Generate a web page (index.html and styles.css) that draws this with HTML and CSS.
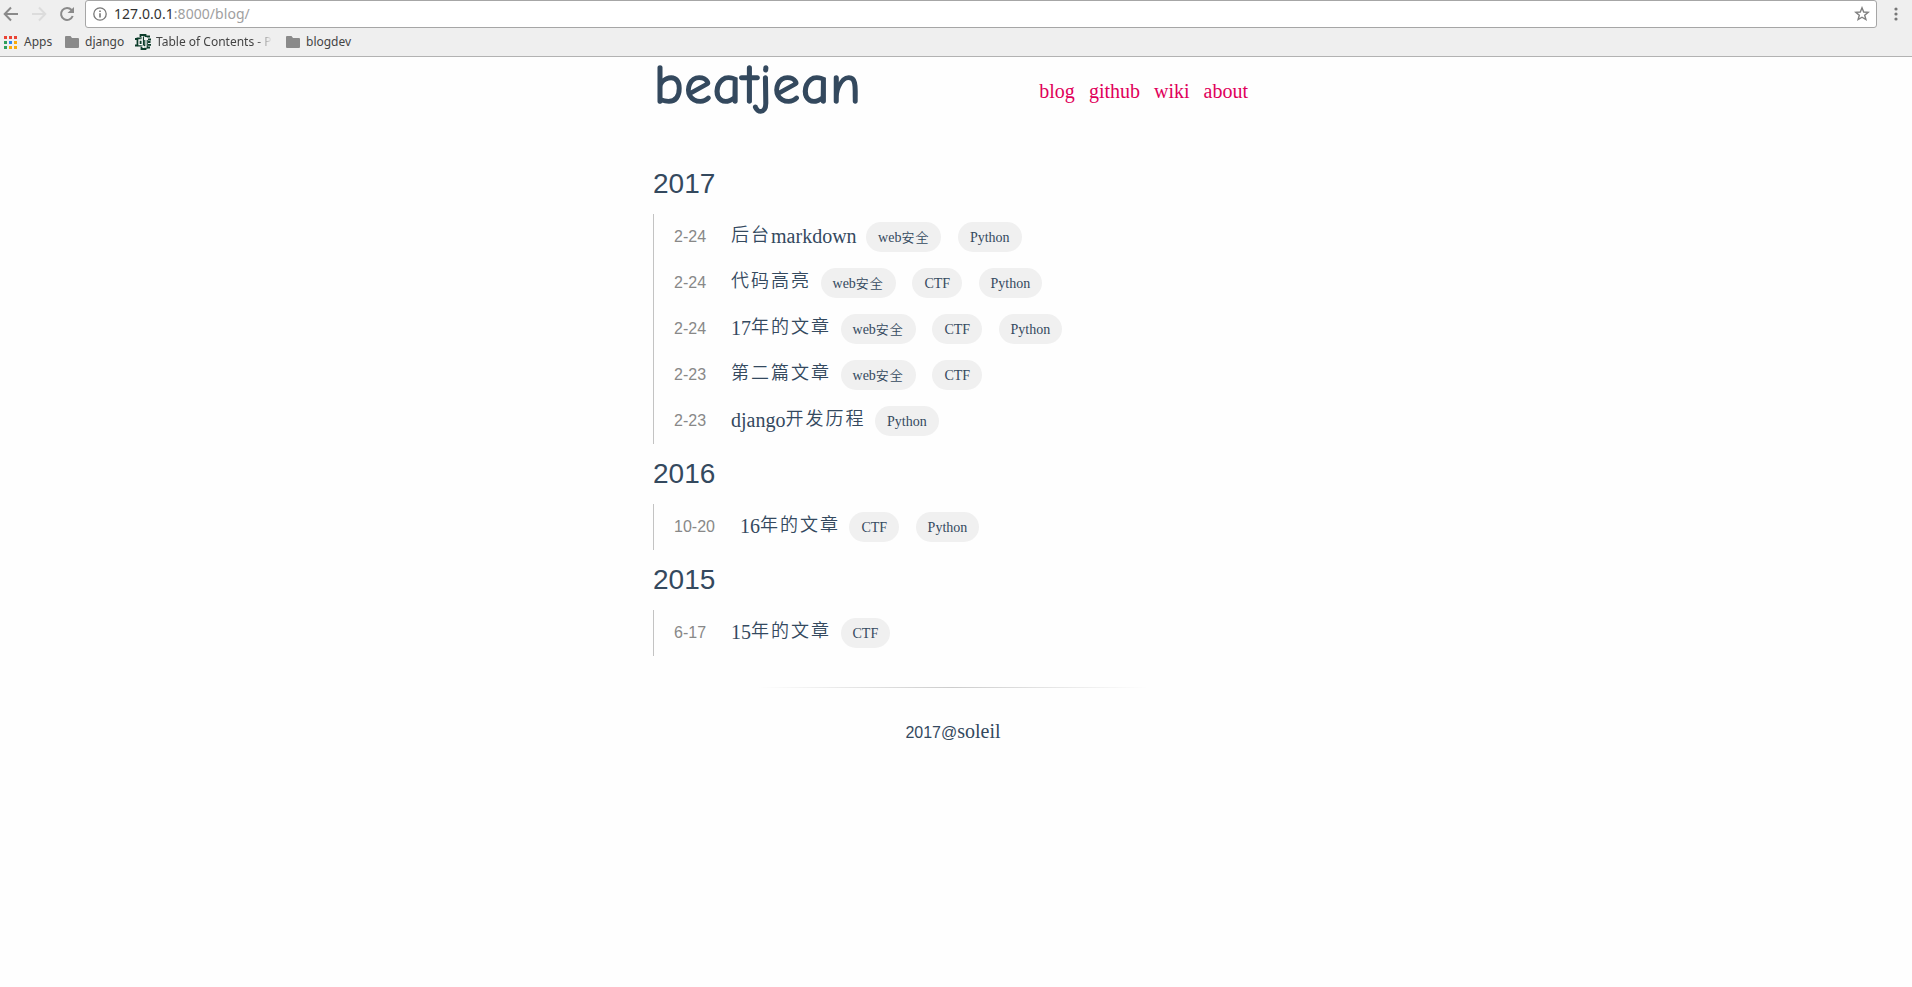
FILE: index.html
```html
<!DOCTYPE html>
<html lang="zh-CN">
<head>
<meta charset="utf-8">
<title>beatjean</title>
<link rel="stylesheet" href="styles.css">
</head>
<body>
<header class="chrome">
  <div class="toolbar">
    <svg class="nav-icons" width="85" height="28" viewBox="0 0 85 28" fill="none" stroke="#8a8a8a" stroke-width="2">
      <path d="M18 14H5.500M11 7.500L4.700 14l6.300 6.500"/>
      <path stroke="#dcdcdc" d="M32 14h12.500M39 7.500l6.300 6.500l-6.300 6.500"/>
      <path d="M71.600 10A6 6 0 1 0 72.700 16"/>
      <path fill="#8a8a8a" stroke="none" d="M74 7v6h-6.500z"/>
    </svg>
    <div class="address">
      <svg class="info" width="14" height="14" viewBox="0 0 14 14" fill="none" stroke="#777"><circle cx="7" cy="7" r="6.200" stroke-width="1.300"/><path stroke-width="1.600" d="M7 6.200v4.300M7 3.400v1.600"/></svg>
      <span class="url"><b>127.0.0.1</b>:8000/blog/</span>
      <svg class="star" width="16" height="16" viewBox="0 0 16 16" fill="none" stroke="#808080" stroke-width="1.400"><path d="M8 1.800l1.700 4.200 4.500.3-3.500 2.900 1.200 4.400L8 11.200l-3.900 2.400 1.200-4.400L1.800 6.300l4.500-.3z"/></svg>
    </div>
    <svg class="menu" width="4" height="14" viewBox="0 0 4 14" fill="#777"><circle cx="2" cy="2" r="1.600"/><circle cx="2" cy="7" r="1.600"/><circle cx="2" cy="12" r="1.600"/></svg>
  </div>
  <nav class="bookmarks">
    <a class="mark apps"><svg width="13" height="13" viewBox="0 0 13 13"><path fill="#ea4335" d="M0 0h3v3H0zM5 0h3v3H5zM10 0h3v3h-3z"/><path fill="#2e9e5b" d="M0 5h3v3H0zM0 10h3v3H0z"/><path fill="#2b87f0" d="M5 5h3v3H5z"/><path fill="#f9ab0b" d="M10 5h3v3h-3zM5 10h3v3H5zM10 10h3v3h-3z"/></svg><span>Apps</span></a>
    <a class="mark folder-django"><svg width="14" height="12" viewBox="0 0 14 12"><path fill="#8a8a8a" d="M1 0h4.500l1.500 2h6a1 1 0 0 1 1 1v8a1 1 0 0 1-1 1H1a1 1 0 0 1-1-1V1a1 1 0 0 1 1-1z"/></svg><span>django</span></a>
    <a class="mark toc"><svg width="16" height="16" viewBox="0 0 16 16"><path fill="none" stroke="#0c3c2a" stroke-width="1.800" d="M5.500 3V1h5v2M10.500 2.500H15M6.500 13v2h4v-1.500M11 13.500h4M2.500 12V4.500H5M0 5h2M0 11.500h2.500M13 5.500h3M13 8h2.500M13 10.800h3"/><path fill="none" stroke="#0c3c2a" stroke-width="3.600" d="M7.200 2.500v9M7.200 6.200H4v4.500h3.200M11 6v6.500H9"/><path fill="none" stroke="#fff" stroke-width="1.300" d="M7.200 2v9.500M7.200 6H4v4.700h3.200M11 6v7H8.500M11 3v1.500"/></svg><span class="fade">Table of Contents - P</span></a>
    <a class="mark folder-blog"><svg width="14" height="12" viewBox="0 0 14 12"><path fill="#8a8a8a" d="M1 0h4.500l1.500 2h6a1 1 0 0 1 1 1v8a1 1 0 0 1-1 1H1a1 1 0 0 1-1-1V1a1 1 0 0 1 1-1z"/></svg><span>blogdev</span></a>
  </nav>
</header>
<main class="page">
  <div class="masthead">
    <h1 class="brand">beatjean</h1>
    <nav class="links"><a>blog</a><a>github</a><a>wiki</a><a>about</a></nav>
  </div>
  <h2 class="year">2017</h2>
  <ul class="posts">
    <li><time>2-24</time><a class="title"><i>后台</i>markdown</a><span class="tag">web<i>安全</i></span><span class="tag">Python</span></li>
    <li><time>2-24</time><a class="title"><i>代码高亮</i></a><span class="tag">web<i>安全</i></span><span class="tag">CTF</span><span class="tag">Python</span></li>
    <li><time>2-24</time><a class="title">17<i>年的文章</i></a><span class="tag">web<i>安全</i></span><span class="tag">CTF</span><span class="tag">Python</span></li>
    <li><time>2-23</time><a class="title"><i>第二篇文章</i></a><span class="tag">web<i>安全</i></span><span class="tag">CTF</span></li>
    <li><time>2-23</time><a class="title">django<i>开发历程</i></a><span class="tag">Python</span></li>
  </ul>
  <h2 class="year">2016</h2>
  <ul class="posts">
    <li><time>10-20</time><a class="title">16<i>年的文章</i></a><span class="tag">CTF</span><span class="tag">Python</span></li>
  </ul>
  <h2 class="year">2015</h2>
  <ul class="posts">
    <li><time>6-17</time><a class="title">15<i>年的文章</i></a><span class="tag">CTF</span></li>
  </ul>
  <hr class="rule">
  <footer class="footer">2017@<a>soleil</a></footer>
</main>
</body>
</html>
```
FILE: styles.css
```css
* { box-sizing: border-box; }
body { margin: 0; min-height: 987px; background: #fefefe; color: #34495e; font-family: "Liberation Sans", Arial, sans-serif; overflow: hidden; }
.chrome { height: 57px; background: #efefef; border-bottom: 1px solid #b2b2b2; font-family: "Noto Sans", sans-serif; }
.toolbar { display: flex; height: 28px; }
.nav-icons { flex: none; }
.address { width: 1792px; height: 28px; display: flex; align-items: center; padding: 0 6px 0 7px; background: #fff; border: 1px solid #a6a6a6; border-radius: 3px; }
.url { margin-left: 7px; font-size: 14px; line-height: 26px; letter-spacing: 0.050px; color: #a0a0a0; }
.url b { font-weight: 400; color: #333; }
.star { margin-left: auto; }
.menu { margin: 7px 0 0 16.500px; }
.bookmarks { display: flex; height: 28px; padding-left: 4px; font-size: 12px; line-height: 28px; color: #444; }
.mark { display: flex; align-items: center; white-space: nowrap; }
.mark span { margin-left: 6px; }
.apps { width: 61px; }
.apps span { margin-left: 7px; }
.folder-django { width: 70px; }
.toc { width: 151px; }
.mark .fade { width: 116px; margin-left: 5px; overflow: hidden; -webkit-mask-image: linear-gradient(90deg, #000 100px, transparent 116px); mask-image: linear-gradient(90deg, #000 100px, transparent 116px); }
.page { width: 600px; margin: 0 auto; position: relative; left: -3px; }
.masthead { display: flex; justify-content: space-between; height: 97px; }
.brand { margin: 0 0 0 1px; font: 400 55px/56px "Comic Neue", "Comic Sans MS", Inter, sans-serif; letter-spacing: 0.900px; -webkit-text-stroke: 1.600px #34495e; }
.links { display: flex; gap: 14px; padding-right: 5px; color: #e0005a; font: 20px/24px "Liberation Serif", serif; padding-top: 22px; }
.year { margin: 0; height: 60px; font-size: 28px; line-height: 32px; font-weight: 400; padding-top: 14px; }
.posts { margin: 0; padding: 0 0 0 20px; list-style: none; border-left: 1px solid #c3c3c3; }
.posts li { height: 46px; display: flex; align-items: center; }
.posts time { margin-right: 25px; color: #888; font-size: 16px; line-height: 20px; }
.title, .tag, .footer a { font-family: "Liberation Serif", "Noto Sans CJK SC", serif; }
.title { margin-right: 9.500px; padding-bottom: 2px; font-size: 20px; line-height: 24px; white-space: nowrap; }
i { font-style: normal; font-weight: 350; font-family: "Noto Sans CJK SC", sans-serif; }
.title i { font-size: 18px; letter-spacing: 2px; line-height: 18px; vertical-align: 2px; }
.tag { height: 30px; margin-right: 16.500px; padding: 0 12px; border-radius: 15px; background: #f0f0f0; font-size: 14px; line-height: 31px; }
.tag i { font-size: 13px; letter-spacing: 1px; line-height: 20px; }
.rule { width: 390px; height: 1px; margin: 31px auto 0; border: 0; background: linear-gradient(90deg, transparent, #ccc, transparent); }
.footer { margin-top: 31px; text-align: center; font-size: 16px; line-height: 24px; }
.footer a { font-size: 20px; }
```
